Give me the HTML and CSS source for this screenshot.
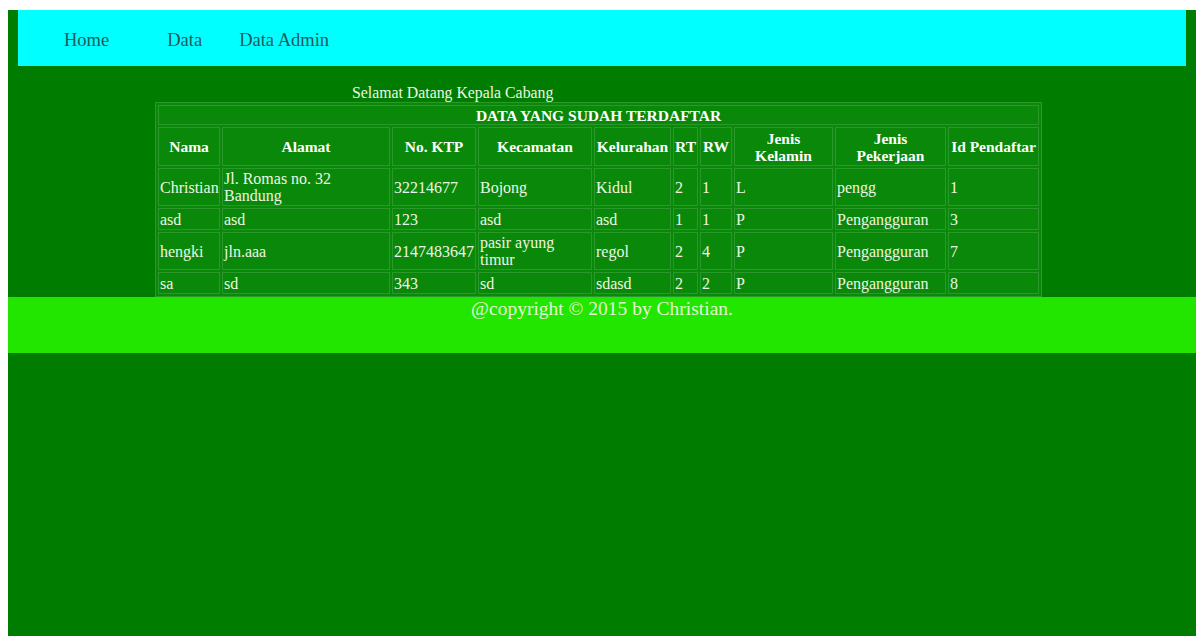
FILE: index.html
```html
<!DOCTYPE html>
<html>
<head>
<meta charset="utf-8">
<title>Data Yang Sudah Terdaftar</title>
<link rel="stylesheet" href="styles.css">
</head>
<body>
<div class="page">
  <nav class="nav">
    <ul class="menu">
      <li class="item item-home"><a href="#">Home</a></li>
      <li class="item item-data"><a href="#">Data</a></li>
      <li class="item"><a href="#">Data Admin</a></li>
    </ul>
  </nav>
  <p class="greeting">Selamat Datang Kepala Cabang</p>
  <table class="data">
    <colgroup>
      <col class="c-nama"><col class="c-alamat"><col class="c-ktp"><col class="c-kec"><col class="c-kel">
      <col class="c-rt"><col class="c-rw"><col class="c-jk"><col class="c-jp"><col class="c-id">
    </colgroup>
    <tr><th class="title" colspan="10">DATA YANG SUDAH TERDAFTAR</th></tr>
    <tr>
      <th>Nama</th>
      <th>Alamat</th>
      <th>No. KTP</th>
      <th>Kecamatan</th>
      <th>Kelurahan</th>
      <th>RT</th>
      <th>RW</th>
      <th>Jenis<br>Kelamin</th>
      <th>Jenis<br>Pekerjaan</th>
      <th>Id Pendaftar</th>
    </tr>
    <tr>
      <td>Christian</td><td>Jl. Romas no. 32 Bandung</td><td>32214677</td><td>Bojong</td><td>Kidul</td><td>2</td><td>1</td><td>L</td><td>pengg</td><td>1</td>
    </tr>
    <tr>
      <td>asd</td><td>asd</td><td>123</td><td>asd</td><td>asd</td><td>1</td><td>1</td><td>P</td><td>Pengangguran</td><td>3</td>
    </tr>
    <tr>
      <td>hengki</td><td>jln.aaa</td><td>2147483647</td><td>pasir ayung timur</td><td>regol</td><td>2</td><td>4</td><td>P</td><td>Pengangguran</td><td>7</td>
    </tr>
    <tr>
      <td>sa</td><td>sd</td><td>343</td><td>sd</td><td>sdasd</td><td>2</td><td>2</td><td>P</td><td>Pengangguran</td><td>8</td>
    </tr>
  </table>
  <footer class="footer">@copyright © 2015 by Christian.</footer>
</div>
</body>
</html>
```

FILE: styles.css
```css
html, body {
  margin: 0;
  padding: 0;
  background: #ffffff;
}
body {
  padding: 10px 8px 8px 8px;
  font-family: "Liberation Serif", "Times New Roman", serif;
}
.page {
  background: #007d00;
  height: 626px;
  display: flex;
  flex-direction: column;
}
.nav {
  background: #00ffff;
  margin: 0 10px;
  height: 56px;
  display: flex;
  align-items: center;
  box-sizing: border-box;
  padding-top: 4px;
}
.menu {
  list-style: none;
  margin: 0;
  padding: 0 0 0 46px;
  display: flex;
  align-items: center;
}
.item a {
  color: #1f5c5c;
  text-decoration: none;
  font-size: 18.5px;
}
.item-home { margin-right: 58px; }
.item-data { margin-right: 37px; }
.greeting {
  margin: 18px 0 0 344px;
  color: #eef6e4;
  font-size: 15.8px;
  line-height: 18px;
}
.data {
  margin: 0 0 0 147px;
  width: 887px;
  table-layout: fixed;
  border-collapse: separate;
  border-spacing: 2px;
  border: 1px solid #2b982b;
  background: #0a880a;
  color: #eef6e4;
  font-size: 16px;
  line-height: 17px;
}
.data th, .data td {
  border: 1px solid #2b982b;
  padding: 1px 0;
}
.data th {
  color: #ffffff;
  font-weight: bold;
  font-size: 15.5px;
  text-align: center;
  height: 35px;
}
.data th.title {
  height: 18px;
  padding: 0;
}
.data td {
  text-align: left;
  vertical-align: middle;
  height: 18px;
  padding: 1px 0 1px 1px;
}
.c-nama { width: 62px; }
.c-alamat { width: 168px; }
.c-ktp { width: 84px; }
.c-kec { width: 114px; }
.c-kel { width: 77px; }
.c-rt { width: 25px; }
.c-rw { width: 32px; }
.c-jk { width: 99px; }
.c-jp { width: 111px; }
.c-id { width: 91px; }
.footer {
  background: #22e600;
  height: 56px;
  color: #e4f4d4;
  font-size: 19.5px;
  text-align: center;
  line-height: 24px;
}
```
